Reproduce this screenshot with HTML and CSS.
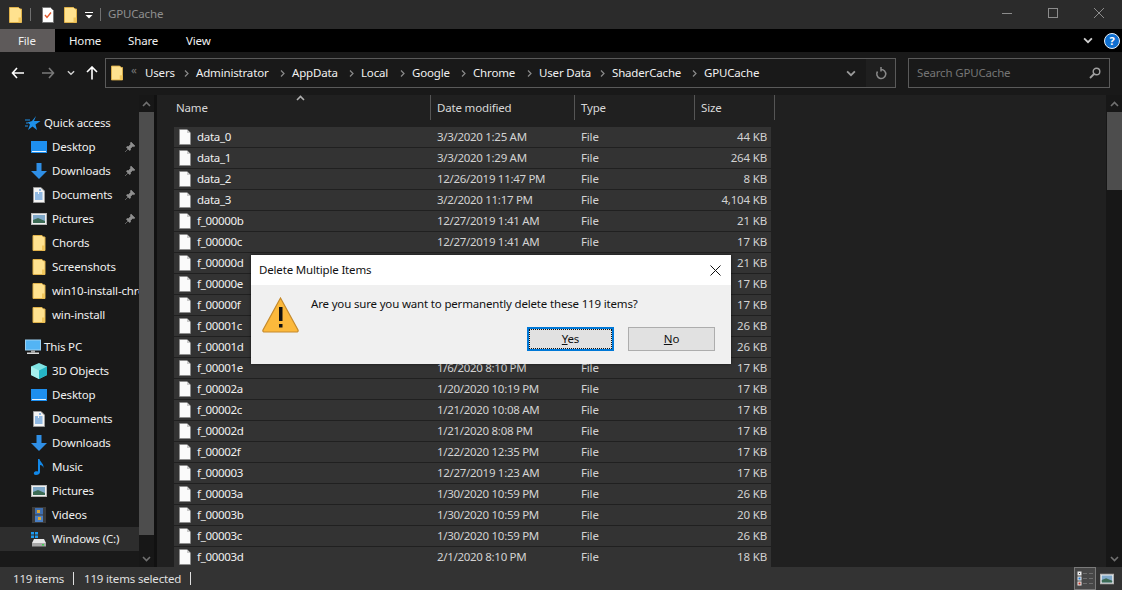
FILE: index.html
```html
<!DOCTYPE html>
<html lang="en">
<head>
<meta charset="utf-8">
<title>GPUCache</title>
<link rel="stylesheet" href="styles.css">
</head>
<body>
<svg class="defs" aria-hidden="true">
  <symbol id="folder" viewBox="0 0 13 16"><path d="M0.5 0.5H9.5L11 2H12.5V15.5H0.5Z" fill="#ffe28f" stroke="#e0b24a"/><path d="M9.5 15.5V10.5H12.5V15.5Z" fill="#f2c75c"/></symbol>
  <symbol id="file" viewBox="0 0 12 16"><path d="M0.5 0.5H8L11.5 4V15.5H0.5Z" fill="#fafafa" stroke="#8a8a8a" stroke-width="0.6"/><path d="M8 0.5V4H11.5Z" fill="#c9c9c9"/></symbol>
  <symbol id="star" viewBox="0 0 16 14"><path d="M11 0L9 5H15.5L10.5 8.5L12 14L7.5 10.5L3 14L5 8.5L2.5 6.5L7 5Z" fill="#1e90e8"/><path d="M0 4H5M1 7H3M0 10H3" stroke="#1e90e8"/></symbol>
  <symbol id="desktop" viewBox="0 0 16 16"><rect y="2" width="16" height="12" fill="#1e8fee"/><rect x="1" y="12" width="14" height="1" fill="#e6f3ff"/></symbol>
  <symbol id="down" viewBox="0 0 16 16"><path d="M5.5 0H10.5V8H16L8 16L0 8H5.5Z" fill="#2f8fe6"/></symbol>
  <symbol id="docs" viewBox="0 0 12 16"><path d="M0.5 0.5H8L11.5 4V15.5H0.5Z" fill="#f4f4f4" stroke="#9a9a9a"/><path d="M6 3H8M2 6H5M6 6H9.5M2 8H9.5M2 10H9.5M2 12H9.5" stroke="#2e7fd0"/></symbol>
  <symbol id="pics" viewBox="0 0 16 16"><rect x="0.5" y="2.5" width="15" height="11" fill="#eee" stroke="#b5b5b5"/><rect x="2" y="4" width="12" height="8" fill="#7fa8c9"/><path d="M2 9L7 7L14 10V12H2Z" fill="#3c6b55"/></symbol>
  <symbol id="pc" viewBox="0 0 16 15"><rect x="0.5" y="0.5" width="15" height="10" fill="#53b4f4" stroke="#9bd0f2"/><rect x="6" y="11" width="4" height="2" fill="#aaa"/><rect x="2" y="13" width="12" height="1.5" fill="#ddd"/></symbol>
  <symbol id="cube" viewBox="0 0 16 16"><path d="M8 0L16 3.5V12L8 16L0 12V3.5Z" fill="#7fe3e3"/><path d="M8 7.5L16 3.5V12L8 16Z" fill="#25b5c6"/><path d="M8 7.5L0 3.5V12L8 16Z" fill="#a6f0ee"/></symbol>
  <symbol id="music" viewBox="0 0 12 16"><path d="M5 0H6.5C7 3 11 4.500 10.500 9C10 7 8.500 6 7 6V13C7 15 5 16 3 16C1 16 0.500 14.500 1 13.500C1.500 12.500 3.500 12 5 12.500Z" fill="#1288e8"/></symbol>
  <symbol id="video" viewBox="0 0 14 16"><rect width="14" height="16" fill="#3b3b3b"/><rect x="3" y="1" width="8" height="6.500" fill="#3f6fb0"/><rect x="3" y="8.500" width="8" height="6.500" fill="#4a7fc4"/><rect x="5" y="3" width="3" height="3" fill="#d9a53a"/><rect x="6" y="10" width="3" height="3" fill="#d9a53a"/></symbol>
  <symbol id="drive" viewBox="0 0 16 16"><path d="M0 1H3V3.500H0ZM4 1H7V3.500H4ZM0 4.500H3V7H0ZM4 4.500H7V7H4Z" fill="#1e9bf0"/><path d="M3 8H13L15 12H1Z" fill="#e8e8e8"/><rect x="1" y="12" width="14" height="3.500" fill="#a8a8a8"/><rect x="11" y="13" width="2" height="1.500" fill="#3ccf4e"/></symbol>
  <symbol id="pin" viewBox="0 0 10 10"><path d="M6 0L10 4L8.800 4.600L7.500 4.500L5.500 6.500L5.500 8L4.500 8.500L1.500 5.500L2 4.500L3.500 4.500L5.500 2.500L5.400 1.200ZM3 7L0 10" fill="#8f8f8f" stroke="#8f8f8f" stroke-width="0.6"/></symbol>
  <symbol id="chev-up" viewBox="0 0 9 6"><path d="M1 5L4.500 1.500L8 5" fill="none" stroke="currentColor" stroke-width="1.600"/></symbol>
  <symbol id="chev-down" viewBox="0 0 9 6"><path d="M1 1L4.500 4.500L8 1" fill="none" stroke="currentColor" stroke-width="1.600"/></symbol>
  <symbol id="crumb-sep" viewBox="0 0 5 7"><path d="M1 0.500L4 3.500L1 6.500" fill="none" stroke="currentColor" stroke-width="1.200"/></symbol>
</svg>

<div class="window">
  <header class="titlebar">
    <svg class="ic13x16 qa-folder"><use href="#folder"/></svg>
    <span class="qa-sep"></span>
    <svg class="qa-doc" viewBox="0 0 12 16"><path d="M0.500 0.500H8.500L11.500 3.500V15.500H0.500Z" fill="#fff" stroke="#777"/><path d="M3 8L5 10.500L9 5.500" fill="none" stroke="#e2572b" stroke-width="1.400"/></svg>
    <svg class="ic13x16 qa-folder2"><use href="#folder"/></svg>
    <svg class="qa-drop" viewBox="0 0 8 7"><rect width="8" height="1" fill="#fff"/><path d="M0.500 3H7.500L4 6.500Z" fill="#fff"/></svg>
    <span class="qa-sep qa-sep2"></span>
    <span class="title-text">GPUCache</span>
    <div class="win-controls">
      <svg class="win-btn" viewBox="0 0 46 29"><path d="M18 13.500H28" stroke="#8c8c8c"/></svg>
      <svg class="win-btn" viewBox="0 0 46 29"><rect x="18.500" y="8.500" width="9" height="9" fill="none" stroke="#8c8c8c"/></svg>
      <svg class="win-btn" viewBox="0 0 46 29"><path d="M18 8L28 18M28 8L18 18" stroke="#8c8c8c"/></svg>
    </div>
  </header>

  <nav class="ribbon">
    <span class="tab tab-file">File</span>
    <span class="tab tab-home">Home</span>
    <span class="tab tab-share">Share</span>
    <span class="tab tab-view">View</span>
    <span class="ribbon-end">
      <svg class="ribbon-chev"><use href="#chev-down"/></svg>
      <svg class="help" viewBox="0 0 16 16"><circle cx="8" cy="8" r="7.500" fill="#0f6fd0" stroke="#e8f2fc"/><text x="8" y="12" text-anchor="middle" class="help-q">?</text></svg>
    </span>
  </nav>

  <section class="addressrow">
    <svg class="nav-arrow back" viewBox="0 0 14 12"><path d="M6 1L1.500 6L6 11M1.500 6H13" fill="none" stroke="#fff" stroke-width="1.600"/></svg>
    <svg class="nav-arrow fwd" viewBox="0 0 14 12"><path d="M8 1L12.500 6L8 11M12.500 6H1" fill="none" stroke="#7a7a7a" stroke-width="1.600"/></svg>
    <svg class="nav-recent"><use href="#chev-down"/></svg>
    <svg class="nav-up" viewBox="0 0 12 14"><path d="M1 6L6 1L11 6M6 1V13.500" fill="none" stroke="#fff" stroke-width="1.600"/></svg>
    <div class="addressbox">
      <svg class="addr-folder"><use href="#folder"/></svg>
      <span class="addr-more">&laquo;</span>
      <div class="crumbs">
        <span class="crumb">Users<svg class="sep"><use href="#crumb-sep"/></svg></span>
        <span class="crumb">Administrator<svg class="sep"><use href="#crumb-sep"/></svg></span>
        <span class="crumb">AppData<svg class="sep"><use href="#crumb-sep"/></svg></span>
        <span class="crumb">Local<svg class="sep"><use href="#crumb-sep"/></svg></span>
        <span class="crumb">Google<svg class="sep"><use href="#crumb-sep"/></svg></span>
        <span class="crumb">Chrome<svg class="sep"><use href="#crumb-sep"/></svg></span>
        <span class="crumb">User Data<svg class="sep"><use href="#crumb-sep"/></svg></span>
        <span class="crumb">ShaderCache<svg class="sep"><use href="#crumb-sep"/></svg></span>
        <span class="crumb">GPUCache</span>
      </div>
      <svg class="addr-chev"><use href="#chev-down"/></svg>
      <span class="addr-refresh">
        <svg class="refresh" viewBox="0 0 12 13"><path d="M6 2.500A4.500 4.500 0 1 1 2.500 4.500M6 0V4.500" fill="none" stroke="#8a8a8a" stroke-width="1.500"/></svg>
      </span>
    </div>
    <div class="searchbox">
      <span class="search-text">Search GPUCache</span>
      <svg class="search-ic" viewBox="0 0 12 12"><circle cx="7.500" cy="4.500" r="3.300" fill="none" stroke="#a0a0a0" stroke-width="1.400"/><path d="M5 7L1 11" stroke="#a0a0a0" stroke-width="1.800"/></svg>
    </div>
  </section>

  <main class="main">
    <aside class="navpane">
      <ul class="tree">
        <li class="node top"><svg class="ico"><use href="#star"/></svg>Quick access</li>
        <li class="node"><svg class="ico"><use href="#desktop"/></svg>Desktop<svg class="pin"><use href="#pin"/></svg></li>
        <li class="node"><svg class="ico"><use href="#down"/></svg>Downloads<svg class="pin"><use href="#pin"/></svg></li>
        <li class="node"><svg class="ico"><use href="#docs"/></svg>Documents<svg class="pin"><use href="#pin"/></svg></li>
        <li class="node"><svg class="ico"><use href="#pics"/></svg>Pictures<svg class="pin"><use href="#pin"/></svg></li>
        <li class="node"><svg class="ico"><use href="#folder"/></svg>Chords</li>
        <li class="node"><svg class="ico"><use href="#folder"/></svg>Screenshots</li>
        <li class="node"><svg class="ico"><use href="#folder"/></svg>win10-install-chrome</li>
        <li class="node"><svg class="ico"><use href="#folder"/></svg>win-install</li>
        <li class="node top group"><svg class="ico"><use href="#pc"/></svg>This PC</li>
        <li class="node"><svg class="ico"><use href="#cube"/></svg>3D Objects</li>
        <li class="node"><svg class="ico"><use href="#desktop"/></svg>Desktop</li>
        <li class="node"><svg class="ico"><use href="#docs"/></svg>Documents</li>
        <li class="node"><svg class="ico"><use href="#down"/></svg>Downloads</li>
        <li class="node"><svg class="ico"><use href="#music"/></svg>Music</li>
        <li class="node"><svg class="ico"><use href="#pics"/></svg>Pictures</li>
        <li class="node"><svg class="ico"><use href="#video"/></svg>Videos</li>
        <li class="node current"><svg class="ico"><use href="#drive"/></svg>Windows (C:)</li>
      </ul>
      <div class="vscroll nav-scroll">
        <svg class="sb-arrow"><use href="#chev-up"/></svg>
        <span class="thumb nav-thumb"></span>
        <svg class="sb-arrow"><use href="#chev-down"/></svg>
      </div>
    </aside>

    <section class="content">
      <div class="colhead">
        <span class="hc hc-name">Name<svg class="sort"><use href="#chev-up"/></svg></span>
        <span class="hc hc-date">Date modified</span>
        <span class="hc hc-type">Type</span>
        <span class="hc hc-size">Size</span>
      </div>
      <div class="rows">
        <div class="row"><span class="c-name"><svg class="fi"><use href="#file"/></svg>data_0</span><span class="c-date">3/3/2020 1:25 AM</span><span class="c-type">File</span><span class="c-size">44 KB</span></div>
        <div class="row"><span class="c-name"><svg class="fi"><use href="#file"/></svg>data_1</span><span class="c-date">3/3/2020 1:29 AM</span><span class="c-type">File</span><span class="c-size">264 KB</span></div>
        <div class="row"><span class="c-name"><svg class="fi"><use href="#file"/></svg>data_2</span><span class="c-date">12/26/2019 11:47 PM</span><span class="c-type">File</span><span class="c-size">8 KB</span></div>
        <div class="row"><span class="c-name"><svg class="fi"><use href="#file"/></svg>data_3</span><span class="c-date">3/2/2020 11:17 PM</span><span class="c-type">File</span><span class="c-size">4,104 KB</span></div>
        <div class="row"><span class="c-name"><svg class="fi"><use href="#file"/></svg>f_00000b</span><span class="c-date">12/27/2019 1:41 AM</span><span class="c-type">File</span><span class="c-size">21 KB</span></div>
        <div class="row"><span class="c-name"><svg class="fi"><use href="#file"/></svg>f_00000c</span><span class="c-date">12/27/2019 1:41 AM</span><span class="c-type">File</span><span class="c-size">17 KB</span></div>
        <div class="row"><span class="c-name"><svg class="fi"><use href="#file"/></svg>f_00000d</span><span class="c-date"></span><span class="c-type"></span><span class="c-size">21 KB</span></div>
        <div class="row"><span class="c-name"><svg class="fi"><use href="#file"/></svg>f_00000e</span><span class="c-date"></span><span class="c-type"></span><span class="c-size">17 KB</span></div>
        <div class="row"><span class="c-name"><svg class="fi"><use href="#file"/></svg>f_00000f</span><span class="c-date"></span><span class="c-type"></span><span class="c-size">17 KB</span></div>
        <div class="row"><span class="c-name"><svg class="fi"><use href="#file"/></svg>f_00001c</span><span class="c-date"></span><span class="c-type"></span><span class="c-size">26 KB</span></div>
        <div class="row"><span class="c-name"><svg class="fi"><use href="#file"/></svg>f_00001d</span><span class="c-date"></span><span class="c-type"></span><span class="c-size">26 KB</span></div>
        <div class="row"><span class="c-name"><svg class="fi"><use href="#file"/></svg>f_00001e</span><span class="c-date">1/6/2020 8:10 PM</span><span class="c-type">File</span><span class="c-size">17 KB</span></div>
        <div class="row"><span class="c-name"><svg class="fi"><use href="#file"/></svg>f_00002a</span><span class="c-date">1/20/2020 10:19 PM</span><span class="c-type">File</span><span class="c-size">17 KB</span></div>
        <div class="row"><span class="c-name"><svg class="fi"><use href="#file"/></svg>f_00002c</span><span class="c-date">1/21/2020 10:08 AM</span><span class="c-type">File</span><span class="c-size">17 KB</span></div>
        <div class="row"><span class="c-name"><svg class="fi"><use href="#file"/></svg>f_00002d</span><span class="c-date">1/21/2020 8:08 PM</span><span class="c-type">File</span><span class="c-size">17 KB</span></div>
        <div class="row"><span class="c-name"><svg class="fi"><use href="#file"/></svg>f_00002f</span><span class="c-date">1/22/2020 12:35 PM</span><span class="c-type">File</span><span class="c-size">17 KB</span></div>
        <div class="row"><span class="c-name"><svg class="fi"><use href="#file"/></svg>f_000003</span><span class="c-date">12/27/2019 1:23 AM</span><span class="c-type">File</span><span class="c-size">17 KB</span></div>
        <div class="row"><span class="c-name"><svg class="fi"><use href="#file"/></svg>f_00003a</span><span class="c-date">1/30/2020 10:59 PM</span><span class="c-type">File</span><span class="c-size">26 KB</span></div>
        <div class="row"><span class="c-name"><svg class="fi"><use href="#file"/></svg>f_00003b</span><span class="c-date">1/30/2020 10:59 PM</span><span class="c-type">File</span><span class="c-size">20 KB</span></div>
        <div class="row"><span class="c-name"><svg class="fi"><use href="#file"/></svg>f_00003c</span><span class="c-date">1/30/2020 10:59 PM</span><span class="c-type">File</span><span class="c-size">26 KB</span></div>
        <div class="row"><span class="c-name"><svg class="fi"><use href="#file"/></svg>f_00003d</span><span class="c-date">2/1/2020 8:10 PM</span><span class="c-type">File</span><span class="c-size">18 KB</span></div>
      </div>
    </section>

    <div class="vscroll list-scroll">
      <svg class="sb-arrow"><use href="#chev-up"/></svg>
      <span class="thumb list-thumb"></span>
      <svg class="sb-arrow"><use href="#chev-down"/></svg>
    </div>
  </main>

  <footer class="statusbar">
    <span class="st st-count">119 items</span>
    <span class="st st-sel">119 items selected</span>
    <span class="st-end"></span>
    <span class="view-btn active">
      <svg class="view-ic" viewBox="0 0 16 15"><rect x="0.500" y="0.500" width="4" height="4" fill="#eee"/><rect x="2" y="2" width="1" height="1" fill="#444"/><rect x="0.500" y="5.500" width="4" height="4" fill="#eee"/><rect x="1.500" y="6.500" width="2" height="2" fill="#2c7fd0"/><rect x="0.500" y="10.500" width="4" height="4" fill="#eee"/><rect x="1.500" y="11.500" width="2" height="2" fill="#c03a2a"/><path d="M6 2.500H10M12 2.500H16M6 7.500H10M12 7.500H16M6 12.500H10M12 12.500H16" stroke="#6f6f6f"/></svg>
    </span>
    <svg class="view-large"><use href="#pics"/></svg>
  </footer>

  <div class="dialog" role="dialog">
    <div class="dlg-title">
      <span>Delete Multiple Items</span>
      <svg class="dlg-x" viewBox="0 0 11 11"><path d="M0.500 0.500L10.500 10.500M10.500 0.500L0.500 10.500" stroke="#111" stroke-width="1"/></svg>
    </div>
    <div class="dlg-body">
      <div class="dlg-msg">
        <svg class="warn" viewBox="0 0 37 36"><path d="M18.500 1L36 33C36.500 34.500 35.500 35 34.500 35H2.500C1.500 35 0.500 34.500 1 33Z" fill="#fcb93c" stroke="#c58a2c" stroke-width="1.200"/><rect x="17" y="10" width="3.500" height="14" fill="#111"/><rect x="17" y="27" width="3.500" height="3.500" fill="#111"/></svg>
        <span class="dlg-text">Are you sure you want to permanently delete these 119 items?</span>
      </div>
      <div class="dlg-actions">
        <button class="btn btn-default"><span class="focus-ring"><u>Y</u>es</span></button>
        <button class="btn btn-plain"><u>N</u>o</button>
      </div>
    </div>
  </div>
</div>
</body>
</html>
```

FILE: styles.css
```css
* { box-sizing: border-box; }
html, body { margin: 0; padding: 0; height: 100%; overflow: hidden; background: #191919; }
body { font: 11.5px/16px "Noto Sans", "Open Sans", sans-serif; letter-spacing: -0.17px; color: #f0f0f0; }
.defs { display: none; }
svg { display: block; flex: none; }

.window { position: relative; width: 1122px; height: 590px; display: flex; flex-direction: column; overflow: hidden; }

/* title bar */
.titlebar { height: 29px; flex: none; background: #2b2b2b; display: flex; align-items: center; padding-left: 9px; color: #8f8f8f; }
.ic13x16 { width: 13px; height: 16px; }
.qa-sep { width: 1px; height: 13px; margin-left: 8px; border-left: 1px solid #707070; }
.qa-doc { width: 12px; height: 16px; margin-left: 11px; }
.qa-folder2 { margin-left: 10px; }
.qa-drop { width: 8px; height: 7px; margin-left: 8px; margin-top: 2px; }
.qa-sep2 { margin-left: 7px; }
.title-text { margin-left: 7px; margin-top: -1px; }
.win-controls { margin-left: auto; display: flex; }
.win-btn { width: 46px; height: 29px; }

/* ribbon */
.ribbon { height: 23px; flex: none; background: #000; display: flex; align-items: center; color: #f0f0f0; }
.tab { display: block; }
.tab-file { width: 55px; height: 23px; line-height: 23px; padding-left: 18px; background: #5e5a5a; }
.tab-home { margin-left: 14px; }
.tab-share { margin-left: 27px; }
.tab-view { margin-left: 28px; }
.ribbon-end { margin-left: auto; display: flex; align-items: center; padding-right: 2px; }
.ribbon-chev { width: 10px; height: 7px; color: #d0d0d0; margin-right: 11px; }
.help { width: 16px; height: 16px; }
.help-q { font: bold 11px "Noto Sans", sans-serif; fill: #fff; }

/* address row */
.addressrow { height: 43px; flex: none; background: #191919; display: flex; align-items: flex-start; position: relative; padding-top: 6px; }
.nav-arrow { width: 14px; height: 12px; margin-top: 9px; }
.back { margin-left: 11px; }
.fwd { margin-left: 16px; }
.nav-recent { width: 8px; height: 6px; margin: 12px 0 0 12px; color: #d0d0d0; }
.nav-up { width: 12px; height: 14px; margin: 8px 0 0 11px; }
.addressbox { width: 791px; height: 30px; margin-left: 7px; border: 1px solid #5a5a5a; display: flex; align-items: center; color: #f0f0f0; }
.addr-folder { width: 12px; height: 16px; margin-left: 5px; }
.addr-more { width: 22px; padding-left: 8px; color: #777; line-height: 12px; margin-top: -6px; }
.crumbs { display: grid; grid-template-columns: 51px 96px 69px 51px 61px 66px 73px 92px 70px; width: 629px; }
.crumb { display: flex; justify-content: space-between; align-items: center; padding-right: 7px; white-space: nowrap; }
.sep { width: 5px; height: 7px; color: #8a8a8a; }
.addr-chev { width: 10px; height: 7px; margin: 0 10px 0 auto; color: #9a9a9a; }
.addr-refresh { width: 29px; height: 28px; background: #1f1f1f; display: flex; align-items: center; justify-content: center; }
.refresh { width: 12px; height: 13px; }
.searchbox { width: 202px; height: 30px; margin-left: 12px; border: 1px solid #5a5a5a; display: flex; align-items: center; justify-content: space-between; padding: 0 8px; color: #757575; }
.search-ic { width: 12px; height: 12px; }

/* main */
.main { flex: 1; min-height: 0; display: flex; background: #111; }
.navpane { width: 154px; flex: none; background: #191919; display: flex; position: relative; }
.tree { list-style: none; margin: 0; padding: 16px 0 0; width: 139px; height: 100%; overflow: hidden; }
.node { height: 24px; display: flex; align-items: center; padding-left: 52px; padding-bottom: 1px; position: relative; white-space: nowrap; overflow: hidden; }
.node.top { padding-left: 44px; }
.node.group { margin-top: 8px; }
.node.current { background: #2d2d2d; }
.ico { position: absolute; left: 31px; top: 4px; width: 16px; height: 16px; }
.node.top .ico { left: 25px; }
.pin { position: absolute; left: 125px; top: 7px; width: 10px; height: 10px; }

.vscroll { width: 16px; flex: none; display: flex; flex-direction: column; align-items: center; background: #171717; color: #707070; }
.sb-arrow { width: 9px; height: 6px; margin: 6px 0 5px; }
.thumb { display: block; width: 15px; background: #4d4d4d; }
.nav-scroll { width: 15px; }
.nav-thumb { height: 423px; margin-bottom: auto; }
.list-thumb { height: 78px; margin-bottom: auto; }

.content { flex: 1; min-width: 0; margin-left: 3px; background: #202020; overflow: hidden; }
.colhead { height: 25px; display: flex; color: #d8d8d8; }
.hc { display: block; height: 25px; line-height: 25px; padding-left: 6px; border-right: 1px solid #555; position: relative; }
.hc-name { width: 274px; padding-left: 19px; }
.hc-date { width: 144px; }
.hc-type { width: 120px; }
.hc-size { width: 80px; }
.sort { position: absolute; left: 139px; top: 0; width: 9px; height: 6px; color: #b0b0b0; }

.rows { padding: 7px 0 0 17px; }
.row { width: 597px; height: 20px; margin-bottom: 1px; background: #333; display: grid; grid-template-columns: 256px 144px 120px 77px; align-items: center; }
.c-name { display: flex; align-items: center; padding-left: 5px; letter-spacing: -0.3px; }
.fi { width: 12px; height: 16px; margin-right: 6px; }
.c-date, .c-type { padding-left: 7px; color: #d2d2d2; }
.c-date { letter-spacing: -0.3px; }
.c-size { text-align: right; padding-right: 4px; color: #d2d2d2; }

/* status bar */
.statusbar { height: 23px; flex: none; background: #333; display: flex; align-items: center; color: #e0e0e0; }
.st { display: block; height: 13px; line-height: 13px; border-right: 1px solid #e0e0e0; }
.st-count { width: 74px; padding-left: 13px; }
.st-sel { width: 117px; padding-left: 10px; }
.st-end { flex: 1; }
.view-btn { width: 22px; height: 23px; display: flex; align-items: center; justify-content: center; }
.view-btn.active { background: #474747; border: 1px solid #7a7a7a; }
.view-ic { width: 16px; height: 15px; }
.view-large { width: 14px; height: 16px; margin: 0 8px 0 4px; }

/* dialog */
.dialog { position: absolute; left: 251px; top: 255px; width: 480px; height: 109px; background: #f0f0f0; box-shadow: 0 0 3px rgba(0,0,0,.55); color: #111; display: flex; flex-direction: column; }
.dlg-title { height: 30px; flex: none; background: #fff; display: flex; align-items: center; justify-content: space-between; padding: 0 10px 1px 8px; }
.dlg-x { width: 11px; height: 11px; margin-top: 1px; }
.dlg-body { flex: 1; position: relative; padding: 12px 16px 0 11px; }
.dlg-msg { display: flex; align-items: flex-start; }
.warn { width: 37px; height: 36px; }
.dlg-text { margin-left: 12px; margin-top: -1px; }
.dlg-actions { position: absolute; right: 16px; top: 42px; display: flex; gap: 14px; }
.btn { width: 87px; height: 24px; padding: 0; margin: 0; border: 1px solid #adadad; background: #e1e1e1; font: inherit; letter-spacing: inherit; color: #111; }
.btn-plain { padding-bottom: 1px; }
.btn-default { border: 2px solid #0078d7; }
.focus-ring { display: block; height: 20px; line-height: 17px; border: 1px dotted #111; }
```
